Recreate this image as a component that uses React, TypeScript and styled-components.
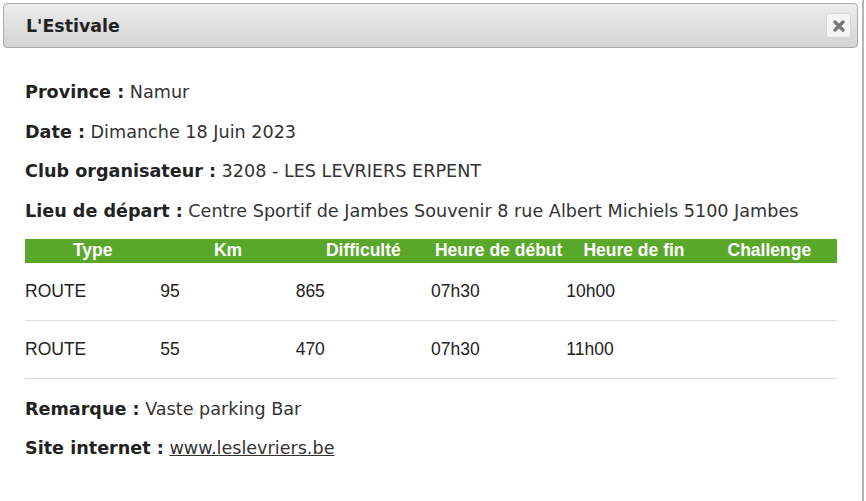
import React from 'react';
import styled, { createGlobalStyle } from 'styled-components';

const GlobalStyle = createGlobalStyle`
  html, body {
    margin: 0;
    padding: 0;
    background: #ffffff;
  }
`;

const Dialog = styled.div`
  width: 864px;
  height: 501px;
  box-sizing: border-box;
  border-right: 2px solid #b5b5b5;
  background: #ffffff;
  padding: 3px 4px 0 3px;
  font-family: 'DejaVu Sans', Verdana, sans-serif;
  color: #333333;
  overflow: hidden;
`;

const TitleBar = styled.div`
  display: flex;
  align-items: center;
  justify-content: space-between;
  height: 45px;
  box-sizing: border-box;
  padding: 0 6px 0 22px;
  border: 1px solid #a9a9a9;
  border-radius: 4px;
  background: linear-gradient(#ececec, #d3d3d3);
`;

const Title = styled.span`
  font-weight: bold;
  font-size: 17.4px;
  color: #222222;
`;

const CloseButton = styled.button`
  width: 25px;
  height: 25px;
  padding: 0;
  display: flex;
  align-items: center;
  justify-content: center;
  border: 1px solid #d6d6d6;
  border-radius: 3px;
  background: #f4f4f4;
  cursor: pointer;
`;

const Content = styled.div`
  padding: 33px 22px 0 22px;
`;

const Line = styled.p`
  margin: 0 0 17.7px 0;
  font-size: 17.6px;
  line-height: 22px;
`;

const Label = styled.b`
  color: #222222;
`;

const Link = styled.a`
  color: #333333;
  text-decoration: underline;
`;

const Table = styled.table`
  width: 812px;
  border-collapse: collapse;
  table-layout: fixed;
  margin: -1px 0 19px 0;
  font-family: 'Liberation Sans', Arial, sans-serif;
`;

const Th = styled.th`
  background: #5aa82a;
  color: #ffffff;
  font-size: 17.5px;
  font-weight: bold;
  height: 24px;
  padding: 0;
  text-align: center;
`;

const Td = styled.td`
  font-size: 17.5px;
  color: #222222;
  padding: 18px 0 19px 0;
  line-height: 20px;
  border-bottom: 1px solid #dddddd;
  text-align: left;
`;

const columns = ['Type', 'Km', 'Difficulté', 'Heure de début', 'Heure de fin', 'Challenge'];

const rows = [
  ['ROUTE', '95', '865', '07h30', '10h00', ''],
  ['ROUTE', '55', '470', '07h30', '11h00', ''],
];

export default function App() {
  return (
    <>
      <GlobalStyle />
      <Dialog>
        <TitleBar>
          <Title>L'Estivale</Title>
          <CloseButton aria-label="Fermer">
            <svg width="14" height="14" viewBox="0 0 14 14">
              <path d="M3 3 L11 11 M11 3 L3 11" stroke="#777777" strokeWidth="3.4" strokeLinecap="round" />
            </svg>
          </CloseButton>
        </TitleBar>
        <Content>
          <Line><Label>Province :</Label> Namur</Line>
          <Line><Label>Date :</Label> Dimanche 18 Juin 2023</Line>
          <Line><Label>Club organisateur :</Label> 3208 - LES LEVRIERS ERPENT</Line>
          <Line><Label>Lieu de départ :</Label> Centre Sportif de Jambes Souvenir 8 rue Albert Michiels 5100 Jambes</Line>
          <Table>
            <thead>
              <tr>
                {columns.map((c) => (
                  <Th key={c}>{c}</Th>
                ))}
              </tr>
            </thead>
            <tbody>
              {rows.map((r, i) => (
                <tr key={i}>
                  {r.map((v, j) => (
                    <Td key={j}>{v}</Td>
                  ))}
                </tr>
              ))}
            </tbody>
          </Table>
          <Line><Label>Remarque :</Label> Vaste parking Bar</Line>
          <Line><Label>Site internet :</Label> <Link href="#">www.leslevriers.be</Link></Line>
        </Content>
      </Dialog>
    </>
  );
}
